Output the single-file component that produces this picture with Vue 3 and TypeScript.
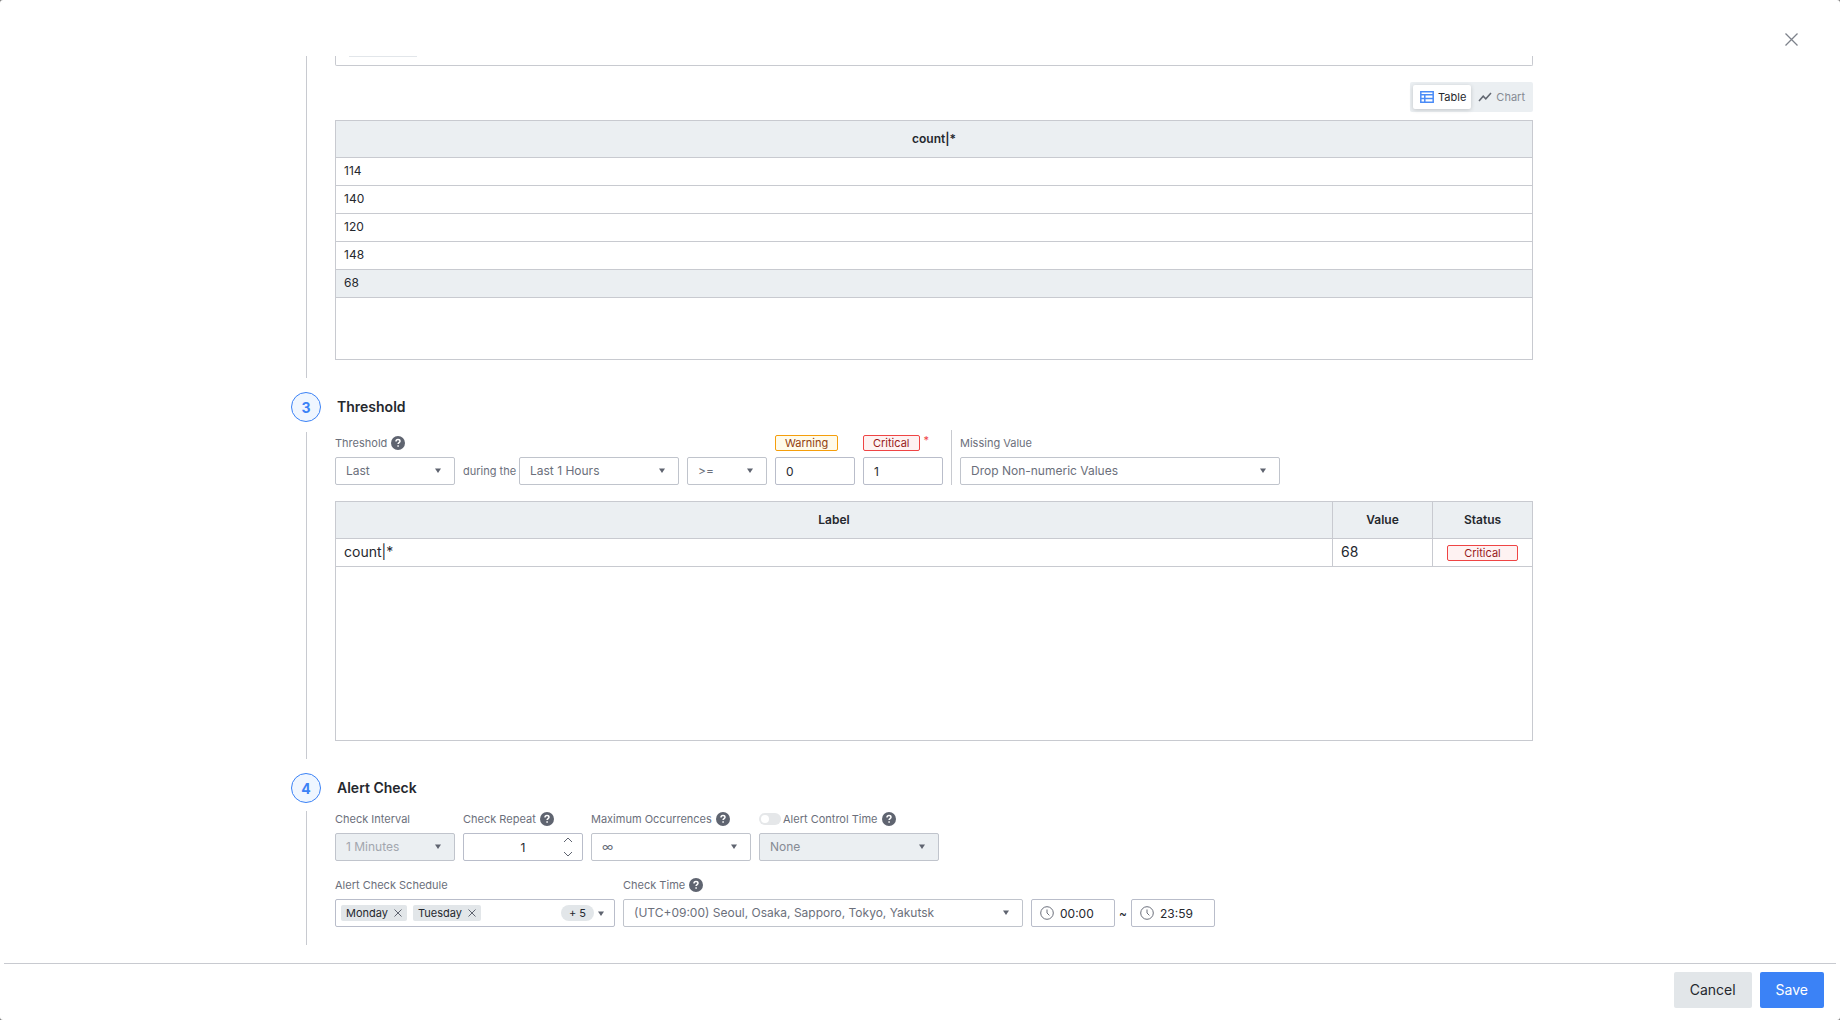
<script setup lang="ts">
import { ref } from 'vue'

const view = ref<'table' | 'chart'>('table')
const counts: number[] = [114, 140, 120, 148, 68]
const warning = ref('0')
const critical = ref('1')
const repeat = ref(1)
const days = ref<string[]>(['Monday', 'Tuesday'])
const startTime = ref('00:00')
const endTime = ref('23:59')
const alertControl = ref(false)

function removeDay(day: string): void {
  days.value = days.value.filter((d) => d !== day)
}
</script>

<template>
  <div class="backdrop">
    <main class="modal">
      <button class="close" type="button" aria-label="Close">
        <svg width="13" height="13" viewBox="0 0 13 13"><path d="M.5 .5l12 12M12.500 .5l-12 12" /></svg>
      </button>

      <div class="scroller">
        <div class="steps">
          <section class="step">
            <div class="rail"><span class="line"></span></div>
            <div class="body">
              <div class="query"><span class="query-chip"></span></div>
              <div class="view-row">
                <div class="view-switch" role="group" aria-label="View">
                  <button type="button" :class="{ active: view === 'table' }" @click="view = 'table'">
                    <svg class="table-icon" width="14" height="12" viewBox="0 0 14 12">
                      <path d="M.8 .8h12.4v10.4H.8zM.8 3.7h12.4M.8 7.5h12.4M4.8 3.7v7.5" />
                    </svg>
                    Table
                  </button>
                  <button type="button" :class="{ active: view === 'chart' }" @click="view = 'chart'">
                    <svg class="chart-icon" width="14" height="10" viewBox="0 0 14 10">
                      <path d="M1 9L5.200 4.200l2.600 2.600L13 1" />
                    </svg>
                    Chart
                  </button>
                </div>
              </div>
              <div class="table-box">
                <table>
                  <thead>
                    <tr><th>count|*</th></tr>
                  </thead>
                  <tbody>
                    <tr v-for="(n, i) in counts" :key="n" :class="{ selected: i === counts.length - 1 }">
                      <td>{{ n }}</td>
                    </tr>
                  </tbody>
                </table>
              </div>
            </div>
          </section>

          <section class="step threshold">
            <div class="rail"><span class="number">3</span><span class="line"></span></div>
            <div class="body">
              <h2>Threshold</h2>
              <div class="row">
                <div class="field">
                  <div class="caption">
                    <label for="method">Threshold</label>
                    <svg class="help" width="14" height="14" viewBox="0 0 14 14"><circle cx="7" cy="7" r="7" /><path d="M5 5.5C5 4.3 5.9 3.6 7 3.6s2 .7 2 1.7c0 1.400-1.900 1.400-1.900 2.800M7.100 9.300v1.500" /></svg>
                  </div>
                  <div class="select w120">
                    <select id="method"><option>Last</option></select>
                    <svg class="caret" width="6" height="5" viewBox="0 0 6 5"><path d="M0 .5h6L3 5z" /></svg>
                  </div>
                </div>
                <span class="during">during the</span>
                <div class="select w160">
                  <select aria-label="Period"><option>Last 1 Hours</option></select>
                  <svg class="caret" width="6" height="5" viewBox="0 0 6 5"><path d="M0 .5h6L3 5z" /></svg>
                </div>
                <div class="select w80">
                  <select aria-label="Operator"><option>&gt;=</option></select>
                  <svg class="caret" width="6" height="5" viewBox="0 0 6 5"><path d="M0 .5h6L3 5z" /></svg>
                </div>
                <div class="field w80">
                  <div class="caption"><label class="badge warning" for="warning">Warning</label></div>
                  <input id="warning" v-model="warning" class="input" type="text" />
                </div>
                <div class="field w80">
                  <div class="caption">
                    <label class="badge critical" for="critical">Critical</label><span class="required">*</span>
                  </div>
                  <input id="critical" v-model="critical" class="input" type="text" />
                </div>
                <span class="divider"></span>
                <div class="field">
                  <div class="caption"><label for="missing">Missing Value</label></div>
                  <div class="select w320">
                    <select id="missing"><option>Drop Non-numeric Values</option></select>
                    <svg class="caret" width="6" height="5" viewBox="0 0 6 5"><path d="M0 .5h6L3 5z" /></svg>
                  </div>
                </div>
              </div>
              <div class="table-box">
                <table class="results">
                  <thead>
                    <tr>
                      <th>Label</th>
                      <th class="narrow">Value</th>
                      <th class="narrow">Status</th>
                    </tr>
                  </thead>
                  <tbody>
                    <tr>
                      <td>count|*</td>
                      <td>68</td>
                      <td class="status"><span class="badge critical">Critical</span></td>
                    </tr>
                  </tbody>
                </table>
              </div>
            </div>
          </section>

          <section class="step">
            <div class="rail"><span class="number">4</span><span class="line"></span></div>
            <div class="body">
              <h2>Alert Check</h2>
              <div class="row">
                <div class="field">
                  <div class="caption"><label for="interval">Check Interval</label></div>
                  <div class="select w120">
                    <select id="interval" class="faint" disabled><option>1 Minutes</option></select>
                    <svg class="caret" width="6" height="5" viewBox="0 0 6 5"><path d="M0 .5h6L3 5z" /></svg>
                  </div>
                </div>
                <div class="field">
                  <div class="caption">
                    <label for="repeat">Check Repeat</label>
                    <svg class="help" width="14" height="14" viewBox="0 0 14 14"><circle cx="7" cy="7" r="7" /><path d="M5 5.5C5 4.3 5.9 3.6 7 3.6s2 .7 2 1.7c0 1.400-1.900 1.400-1.900 2.800M7.100 9.300v1.500" /></svg>
                  </div>
                  <div class="stepper w120">
                    <input id="repeat" v-model="repeat" class="input" type="number" min="1" />
                    <div class="arrows">
                      <button type="button" aria-label="Increase" @click="repeat++">
                        <svg width="10" height="6" viewBox="0 0 10 6"><path d="M1 5l4-4 4 4" /></svg>
                      </button>
                      <button type="button" aria-label="Decrease" @click="repeat--">
                        <svg width="10" height="6" viewBox="0 0 10 6"><path d="M1 1l4 4 4-4" /></svg>
                      </button>
                    </div>
                  </div>
                </div>
                <div class="field">
                  <div class="caption">
                    <label for="max">Maximum Occurrences</label>
                    <svg class="help" width="14" height="14" viewBox="0 0 14 14"><circle cx="7" cy="7" r="7" /><path d="M5 5.5C5 4.3 5.9 3.6 7 3.6s2 .7 2 1.7c0 1.400-1.900 1.400-1.900 2.800M7.100 9.300v1.500" /></svg>
                  </div>
                  <div class="select w160">
                    <select id="max"><option>∞</option></select>
                    <svg class="caret" width="6" height="5" viewBox="0 0 6 5"><path d="M0 .5h6L3 5z" /></svg>
                  </div>
                </div>
                <div class="field">
                  <div class="caption">
                    <input id="control" v-model="alertControl" class="toggle" type="checkbox" />
                    <label for="control">Alert Control Time</label>
                    <svg class="help" width="14" height="14" viewBox="0 0 14 14"><circle cx="7" cy="7" r="7" /><path d="M5 5.5C5 4.3 5.9 3.6 7 3.6s2 .7 2 1.7c0 1.400-1.900 1.400-1.900 2.800M7.100 9.300v1.500" /></svg>
                  </div>
                  <div class="select w180">
                    <select aria-label="Alert Control Time" :disabled="!alertControl"><option>None</option></select>
                    <svg class="caret" width="6" height="5" viewBox="0 0 6 5"><path d="M0 .5h6L3 5z" /></svg>
                  </div>
                </div>
              </div>

              <div class="row second">
                <div class="field">
                  <div class="caption"><span id="schedule">Alert Check Schedule</span></div>
                  <div class="multi" role="group" aria-labelledby="schedule">
                    <span v-for="day in days" :key="day" class="tag">
                      {{ day }}
                      <button type="button" :aria-label="`Remove ${day}`" @click="removeDay(day)">
                        <svg width="8" height="8" viewBox="0 0 8 8"><path d="M.5 .5l7 7M7.500 .5l-7 7" /></svg>
                      </button>
                    </span>
                    <button class="more" type="button">+ 5</button>
                    <svg class="multi-caret" width="6" height="5" viewBox="0 0 6 5"><path d="M0 .5h6L3 5z" /></svg>
                  </div>
                </div>
                <div class="field">
                  <div class="caption">
                    <label for="zone">Check Time</label>
                    <svg class="help" width="14" height="14" viewBox="0 0 14 14"><circle cx="7" cy="7" r="7" /><path d="M5 5.5C5 4.3 5.9 3.6 7 3.6s2 .7 2 1.7c0 1.400-1.900 1.400-1.900 2.800M7.100 9.300v1.500" /></svg>
                  </div>
                  <div class="select w400">
                    <select id="zone"><option>(UTC+09:00) Seoul, Osaka, Sapporo, Tokyo, Yakutsk</option></select>
                    <svg class="caret" width="6" height="5" viewBox="0 0 6 5"><path d="M0 .5h6L3 5z" /></svg>
                  </div>
                </div>
                <div class="range">
                  <label class="time">
                    <svg width="14" height="14" viewBox="0 0 14 14"><circle cx="7" cy="7" r="6.300" /><path d="M7 3.500V7l2.400 2.400" /></svg>
                    <input v-model="startTime" type="text" aria-label="Start time" />
                  </label>
                  <span class="tilde">~</span>
                  <label class="time">
                    <svg width="14" height="14" viewBox="0 0 14 14"><circle cx="7" cy="7" r="6.300" /><path d="M7 3.500V7l2.400 2.400" /></svg>
                    <input v-model="endTime" type="text" aria-label="End time" />
                  </label>
                </div>
              </div>
            </div>
          </section>
        </div>
      </div>

      <footer>
        <button class="cancel" type="button">Cancel</button>
        <button class="save" type="button">Save</button>
      </footer>
    </main>
  </div>
</template>

<style>
body {
  background: #7b7b7b;
}
</style>

<style scoped>
.backdrop,
.backdrop * {
  box-sizing: border-box;
}
.backdrop {
  font-family: Inter, 'Noto Sans', sans-serif;
  font-size: 12px;
  color: #25282e;
}
button,
input,
select {
  font: inherit;
  color: inherit;
  margin: 0;
}
button {
  border: 0;
  padding: 0;
  background: none;
  cursor: pointer;
}
svg {
  display: block;
  flex: none;
  fill: none;
}
.modal {
  position: relative;
  display: flex;
  flex-direction: column;
  min-height: 100vh;
  padding: 56px 4px 0;
  background: #fff;
  border-radius: 3px;
}
.close {
  position: absolute;
  top: 33px;
  right: 42px;
}
.close svg {
  stroke: #7d828b;
  stroke-width: 1.300;
}
.scroller {
  flex: 1;
  padding: 0 16px 0 0;
}
.steps {
  max-width: 1242px;
  margin: 0 auto;
}
.step {
  display: flex;
  gap: 14px;
  margin-bottom: 14px;
}
.rail {
  display: flex;
  flex-direction: column;
  align-items: center;
  gap: 8px;
  width: 30px;
}
.threshold .rail {
  gap: 10px;
}
.number {
  display: flex;
  align-items: center;
  justify-content: center;
  width: 30px;
  height: 30px;
  border: 1px solid #3b82f6;
  border-radius: 50%;
  background: #eff6ff;
  color: #3b82f6;
  font-size: 14px;
  font-weight: 700;
}
.line {
  flex: 1;
  width: 1px;
  background: #c8cad0;
}
.body {
  flex: 1;
  min-width: 0;
  padding-bottom: 18px;
}
h2 {
  margin: 0 0 6px;
  padding-left: 2px;
  font-size: 14px;
  line-height: 30px;
  font-weight: 600;
}
.threshold h2 {
  margin-bottom: 8px;
}
.query {
  height: 10px;
  padding-left: 13px;
  border: 1px solid #c8cad0;
  border-top: 0;
  border-radius: 0 0 2px 2px;
}
.query-chip {
  display: block;
  width: 68px;
  height: 1px;
  background: #e2e6ea;
}
.view-row {
  display: flex;
  justify-content: flex-end;
  margin: 16px 0 8px;
}
.view-switch {
  display: flex;
  padding: 3px;
  border-radius: 2px;
  background: #ebeff2;
}
.view-switch button {
  display: flex;
  align-items: center;
  gap: 4px;
  height: 24px;
  padding: 0 5px 0 7px;
  border-radius: 2px;
  color: #868b94;
  font-size: 11px;
}
.view-switch .active {
  background: #fff;
  color: #25282e;
  box-shadow: 0 1px 4px rgb(0 0 0 / 18%);
}
.table-icon {
  stroke: #4a8bf7;
  stroke-width: 1.500;
}
.chart-icon {
  stroke: #616670;
  stroke-width: 1.500;
}
.table-box {
  min-height: 240px;
  border: 1px solid #c8cad0;
}
table {
  width: 100%;
  border-collapse: separate;
  border-spacing: 0;
  table-layout: fixed;
}
th,
td {
  padding: 0 8px 2px;
  border-bottom: 1px solid #c8cad0;
}
th {
  height: 37px;
  background: #ebeff2;
  font-size: 12px;
  font-weight: 600;
}
td {
  height: 28px;
  font-size: 12px;
}
.selected td {
  background: #ebeff2;
}
.results td {
  font-size: 14px;
}
.results th + th,
.results td + td {
  border-left: 1px solid #c8cad0;
}
.results .narrow {
  width: 100px;
}
.results .status {
  padding: 0 14px;
}
.row {
  display: flex;
  align-items: flex-end;
  gap: 8px;
}
.second {
  margin-top: 14px;
}
.threshold .row {
  margin-bottom: 16px;
}
.threshold .row > * {
  flex: none;
}
.caption {
  display: flex;
  align-items: center;
  height: 20px;
  margin-bottom: 4px;
  color: #6b6f7b;
  font-size: 11px;
  white-space: nowrap;
}
.help {
  margin-left: 4px;
}
.help circle {
  fill: #5f6470;
}
.help path {
  stroke: #fff;
  stroke-width: 1.500;
}
.w80 {
  width: 80px;
}
.w120 {
  width: 120px;
}
.w160 {
  width: 160px;
}
.w180 {
  width: 180px;
}
.w320 {
  width: 320px;
}
.w400 {
  width: 400px;
}
.select,
.stepper {
  position: relative;
}
.select select {
  display: block;
  appearance: none;
  width: 100%;
  height: 28px;
  padding: 0 24px 2px 10px;
  border: 1px solid #c0c4cc;
  border-radius: 2px;
  background: #fff;
  color: #6b6f7b;
}
.select select:disabled {
  background: #ebeff2;
  color: #868b94;
  opacity: 1;
}
.select select.faint {
  color: #a2a6ae;
}
.caret {
  position: absolute;
  top: 11px;
  right: 14px;
  pointer-events: none;
}
.caret path,
.multi-caret path {
  fill: #5f6470;
}
.during {
  width: 48px;
  height: 28px;
  color: #6b6f7b;
  font-size: 11px;
  line-height: 28px;
  white-space: nowrap;
}
.input {
  display: block;
  width: 100%;
  height: 28px;
  padding: 0 10px;
  border: 1px solid #b9bdca;
  border-radius: 2px;
  background: #fff;
}
.badge {
  display: block;
  height: 16px;
  padding: 0 9px;
  border: 1px solid;
  border-radius: 2px;
  font-size: 11px;
  line-height: 14px;
  text-align: center;
}
.badge.warning {
  border-color: #f59e0b;
  background: #fffbeb;
  color: #92400e;
}
.badge.critical {
  border-color: #ef4444;
  background: #fef2f2;
  color: #991b1b;
}
.required {
  align-self: flex-start;
  margin-left: 4px;
  color: #ef4444;
}
.divider {
  width: 1px;
  height: 55px;
  background: #c8cad0;
}
.stepper .input {
  appearance: textfield;
  padding: 0 30px;
  text-align: center;
}
.stepper .input::-webkit-inner-spin-button {
  display: none;
}
.arrows {
  position: absolute;
  top: 4px;
  right: 10px;
  display: flex;
  flex-direction: column;
  gap: 8px;
}
.arrows svg,
.tag svg {
  stroke: #5f6470;
}
.toggle {
  appearance: none;
  display: flex;
  align-items: center;
  width: 22px;
  height: 12px;
  margin-right: 2px;
  padding: 0 2px;
  border-radius: 6px;
  background: #e5e7e9;
}
.toggle::before {
  content: '';
  width: 8px;
  height: 8px;
  border-radius: 50%;
  background: #fff;
}
.toggle:checked {
  justify-content: flex-end;
  background: #3b82f6;
}
.multi {
  display: flex;
  align-items: center;
  gap: 6px;
  width: 280px;
  height: 28px;
  padding: 0 10px 0 5px;
  border: 1px solid #b9bdca;
  border-radius: 2px;
}
.tag {
  display: flex;
  align-items: center;
  gap: 6px;
  height: 16px;
  padding: 0 5px;
  border-radius: 2px;
  background: #e2e6e9;
  font-size: 11px;
}
.more {
  height: 16px;
  margin-left: auto;
  padding: 0 8px;
  border-radius: 8px;
  background: #e2e6e9;
  font-size: 11px;
}
.multi-caret {
  margin-left: -2px;
}
.range {
  display: flex;
  align-items: center;
}
.tilde {
  width: 16px;
  text-align: center;
}
.time {
  display: flex;
  align-items: center;
  gap: 6px;
  width: 84px;
  height: 28px;
  padding: 0 8px;
  border: 1px solid #b9bdca;
  border-radius: 2px;
}
.time svg {
  stroke: #6b6f7b;
}
.time input {
  width: 100%;
  min-width: 0;
  padding: 0;
  border: 0;
  background: none;
}
footer {
  display: flex;
  justify-content: flex-end;
  gap: 8px;
  padding: 8px 12px 12px;
  border-top: 1px solid #c8cad0;
}
footer button {
  height: 36px;
  padding: 0 16px 2px;
  border-radius: 2px;
  font-size: 14px;
}
.cancel {
  background: #e2e6e9;
}
.save {
  background: #3b82f6;
  color: #fff;
}
</style>
